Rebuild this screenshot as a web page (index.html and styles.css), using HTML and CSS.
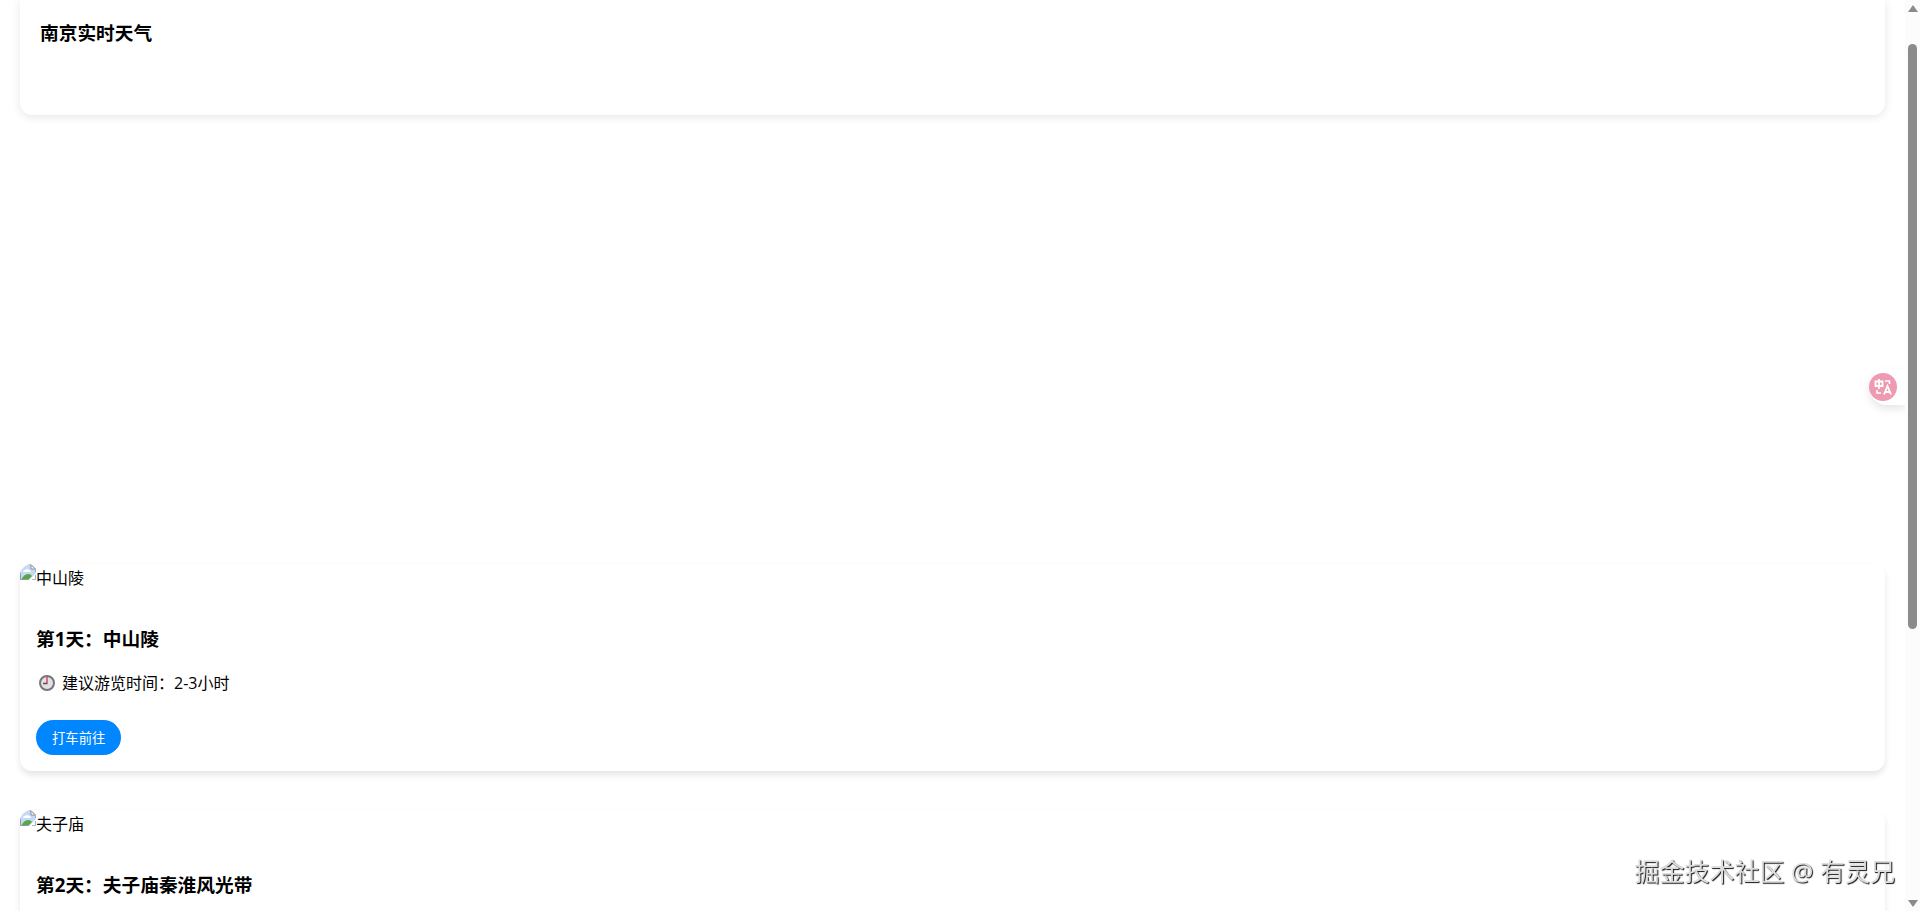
FILE: index.html
```html
<!DOCTYPE html>
<html lang="zh-CN">
<head>
    <meta charset="UTF-8">
    <meta name="viewport" content="width=device-width, initial-scale=1.0">
    <title>南京旅游攻略</title>
    <link rel="stylesheet" href="styles.css">
</head>
<body>
    <svg class="defs" aria-hidden="true">
        <symbol id="broken" viewBox="0 0 16 16">
            <path d="M0 1h11l5 5v3L9 16H0z" fill="#c3d9f5"/>
            <path d="M3 8q0-2 2-2 2-2 4 0 2 0 2 2z" fill="#fff"/>
            <path d="M1 16q3-6 7-6 3 0 4 2l-4 4z" fill="#57a845"/>
            <path d="M11 1v4h4.500z" fill="#fff" stroke="#8b8f96"/>
            <path d="M3 .5h8l4.500 4.500v3M15.500 11v4.500H12" fill="none" stroke="#a9b2bd"/>
            <path d="M.5 4v11.500h8" fill="none" stroke="#8f9aa5"/>
        </symbol>
    </svg>

    <div class="container">
        <section class="weather-card">
            <h3>南京实时天气</h3>
            <div class="weather-info"></div>
        </section>

        <div class="map"></div>

        <div class="day-card">
            <div class="photo"><svg><use href="#broken"/></svg>中山陵</div>
            <div class="content">
                <h3>第1天：中山陵</h3>
                <p>
                    <svg class="clock" viewBox="0 0 16 16">
                        <circle cx="8" cy="8" r="7" fill="#e3dfe3" stroke="#77747a" stroke-width="2"/>
                        <path d="M8 2v6" stroke="#d9486e" stroke-width="1.500"/>
                        <path d="M8.500 8.500H4" stroke="#55525a" stroke-width="1.500"/>
                    </svg>
                    建议游览时间：2-3小时
                </p>
                <button class="taxi-btn">打车前往</button>
            </div>
        </div>

        <div class="day-card">
            <div class="photo"><svg><use href="#broken"/></svg>夫子庙</div>
            <div class="content">
                <h3>第2天：夫子庙秦淮风光带</h3>
            </div>
        </div>
    </div>

    <button class="translate" aria-label="翻译">
        <svg viewBox="0 0 28 28">
            <circle cx="14" cy="14" r="14" fill="#ee9ab3"/>
            <g fill="none" stroke="#fff" stroke-width="1.800">
                <path d="M6.500 8.500h7v4.500h-7zM10 6v10"/>
                <path d="M16 8h4.500v3" stroke-width="1.500"/>
                <path d="M8 17v3h4" stroke-width="1.500"/>
                <path d="M15 21.500l3.500-8.500 3.500 8.500M16.500 19h4"/>
            </g>
        </svg>
    </button>

    <div class="watermark">掘金技术社区 @ 有灵兄</div>

    <div class="scrollbar">
        <div class="arrow up"></div>
        <div class="thumb"></div>
        <div class="arrow down"></div>
    </div>
</body>
</html>
```

FILE: styles.css
```css
* {
    box-sizing: border-box;
}

body {
    margin: 0;
    height: 100vh;
    overflow: hidden;
    background: #fff;
    color: #000;
    font-family: "Open Sans", "Noto Sans CJK SC", sans-serif;
}

.defs {
    position: absolute;
    width: 0;
    height: 0;
}

.container {
    padding: 0 20px;
    margin-right: 15px;
}

h3 {
    margin: 0;
    line-height: 25px;
}

.weather-card {
    padding: 20px;
    border-radius: 0 0 12px 12px;
    box-shadow: 0 2px 10px rgba(0, 0, 0, 0.1);
}

.weather-info {
    height: 50px;
}

.map {
    height: 400px;
    margin: 25px 0 24px;
}

/* day cards */
.day-card {
    min-height: 200px;
    margin-bottom: 39px;
    border-radius: 12px;
    overflow: hidden;
    box-shadow: 0 4px 6px rgba(0, 0, 0, 0.1);
}

.photo {
    display: flex;
    height: 28px;
    line-height: 28px;
}

.photo svg {
    width: 16px;
    height: 16px;
}

.content {
    padding: 34px 16px 16px;
}

.content p {
    display: flex;
    align-items: center;
    gap: 7px;
    margin: 20px 0 25px;
    padding-left: 3px;
    line-height: 24px;
}

.clock {
    width: 16px;
    height: 16px;
}

.taxi-btn {
    display: block;
    height: 35px;
    padding: 0 16px;
    border: none;
    border-radius: 20px;
    background: #0086ff;
    color: #fff;
    font-family: inherit;
    cursor: pointer;
}

/* floating widgets */
.translate {
    position: fixed;
    top: 369px;
    right: 15px;
    width: 36px;
    height: 36px;
    padding: 0;
    border: none;
    border-radius: 18px 0 0 18px;
    background: #fff;
    box-shadow: 0 4px 8px rgba(0, 0, 0, 0.1);
    text-align: left;
}

.translate svg {
    display: block;
    width: 28px;
    height: 28px;
}

.watermark {
    position: fixed;
    right: 25px;
    bottom: 22px;
    font-size: 25px;
    line-height: 36px;
    color: #ddd;
    text-shadow: 1px 1px 1px #111;
}

.scrollbar {
    position: fixed;
    top: 0;
    right: 0;
    bottom: 0;
    display: flex;
    flex-direction: column;
    align-items: center;
    width: 15px;
    padding: 5px 0 4px;
    background: #fcfcfc;
}

.thumb {
    width: 9px;
    height: 585px;
    margin: 32px 0 auto;
    border-radius: 5px;
    background: #8b8b8b;
}

.arrow {
    border: 5px solid transparent;
}

.up {
    border-top: none;
    border-bottom: 7px solid #8b8b8b;
}

.down {
    border-bottom: none;
    border-top: 7px solid #8b8b8b;
}
```
